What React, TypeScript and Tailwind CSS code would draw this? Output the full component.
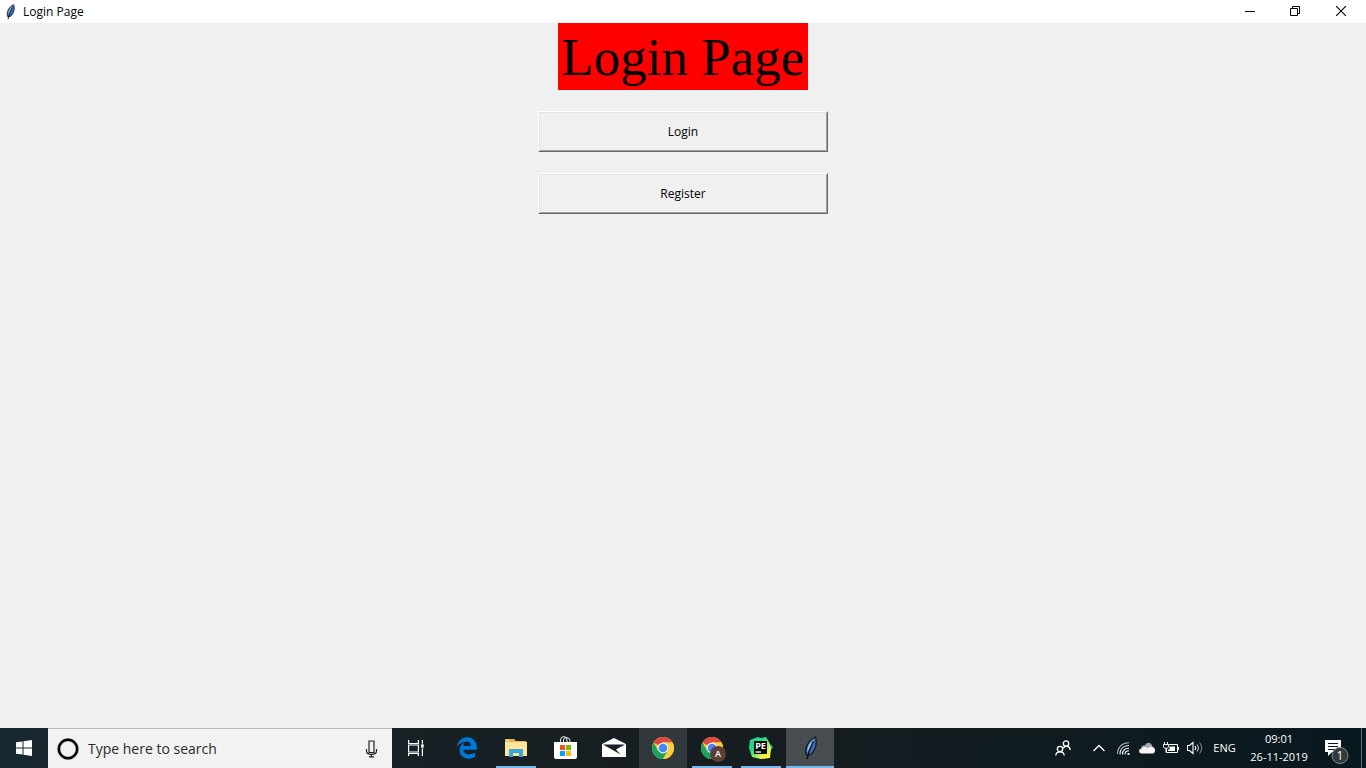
import type { ReactNode } from "react";
import { FaEdgeLegacy } from "react-icons/fa6";

function Feather({ className }: { className: string }) {
  return (
    <svg viewBox="0 0 16 24" className={className} aria-hidden="true">
      <path d="M13.500 1 C15.500 6 14 14 9 18.500 L4.500 19 C2.500 13 5 5 13.500 1Z" fill="#3c6fb0" stroke="#11161c" strokeWidth="1.200" />
      <path d="M12.500 3 C7.500 6 5 11 5.200 16.500 L9 11 Z" fill="#8db8ea" />
      <path d="M11.500 5 C9 10 6.500 16 5 23" fill="none" stroke="#0b0d10" strokeWidth="1.300" />
    </svg>
  );
}

function ChromeLogo() {
  return (
    <svg viewBox="0 0 24 24" className="size-6" aria-hidden="true">
      <circle cx="12" cy="12" r="11" fill="#fccd3c" />
      <path d="M12 12 L2.470 6.500 A11 11 0 0 1 21.530 6.500 L12 6.500 Z" fill="#dd4b3e" />
      <path d="M2.470 6.500 A11 11 0 0 0 12 23 L16.800 14.700 L12 12 L7.200 14.700 Z" fill="#1da261" />
      <path d="M12 6.500 H21.530 A11 11 0 0 1 12 23 L16.800 14.700 Z" fill="#fccd3c" />
      <circle cx="12" cy="12" r="5.400" fill="#f4f4f4" />
      <circle cx="12" cy="12" r="4.300" fill="#4587f3" />
    </svg>
  );
}

function Task({ label, open, tint = "", children }: { label: string; open?: boolean; tint?: string; children: ReactNode }) {
  return (
    <button type="button" aria-label={label} className={`relative flex h-10 w-12 shrink-0 items-center justify-center ${tint}`}>
      {children}
      {open && <span className={`absolute bottom-0 h-0.5 bg-[#76b9ed] ${label === "Login Page" ? "inset-x-0" : "inset-x-1"}`} />}
    </button>
  );
}

function TitleBar() {
  return (
    <header className="flex h-[23px] items-center bg-white pl-1">
      <Feather className="h-4 w-3" />
      <span className="ml-[7px] flex-1 text-xs leading-4">Login Page</span>
      <div className="flex h-full items-center pb-0.5">
        <button type="button" aria-label="Minimize" className="flex w-12 justify-center">
          <svg viewBox="0 0 10 10" className="size-2.5"><path d="M0 5.500H10" stroke="#000" /></svg>
        </button>
        <button type="button" aria-label="Restore" className="flex w-[42px] justify-center">
          <svg viewBox="0 0 10 10" className="size-2.5" fill="none" stroke="#000">
            <path d="M.5 2.500H7.500V9.500H.5ZM2.500 2.500V.5H9.500V7.500H7.500" />
          </svg>
        </button>
        <button type="button" aria-label="Close" className="flex w-[50px] justify-center">
          <svg viewBox="0 0 10 10" className="size-2.5"><path d="M0 0L10 10M10 0L0 10" stroke="#000" strokeWidth="1.100" /></svg>
        </button>
      </div>
    </header>
  );
}

function RaisedButton({ children }: { children: ReactNode }) {
  return (
    <button
      type="button"
      className="h-[41px] w-[290px] border border-t-white border-r-[#696969] border-b-[#696969] border-l-white bg-[#f0f0f0] text-xs leading-4 shadow-[inset_1px_1px_#e3e3e3,inset_-1px_-1px_#a0a0a0]"
    >
      {children}
    </button>
  );
}

function Tray() {
  return (
    <div className="ml-auto flex h-full items-center text-white">
      <button type="button" aria-label="People" className="flex w-12 justify-center">
        <svg viewBox="0 0 16 16" className="size-4" fill="none" stroke="currentColor" strokeWidth="1.300">
          <circle cx="11" cy="3.500" r="2.700" />
          <circle cx="5" cy="9" r="2.700" />
          <path d="M.8 15.500C1 10.700 9 10.700 9.200 15.500M8.200 8.200C10 5.200 14.800 6 15.200 10" />
        </svg>
      </button>
      <button type="button" aria-label="Show hidden icons" className="flex w-6 justify-center">
        <svg viewBox="0 0 12 8" className="h-2 w-3" fill="none" stroke="currentColor" strokeWidth="1.300"><path d="M.5 7L6 1.500L11.500 7" /></svg>
      </button>
      <button type="button" aria-label="Network" className="flex w-6 justify-center">
        <svg viewBox="0 0 14 14" className="size-3.5" fill="none" stroke="currentColor" strokeWidth="1.100">
          <path d="M1.500 13C1.500 6.500 6 1.800 13 1.800" opacity=".7" />
          <path d="M4 13.500C4 8 7.500 4.500 13 4.500M6.500 13.500C6.500 9.500 9 7.200 13 7.200M9 13.500C9 11 10.500 9.800 13 9.800" />
          <path d="M11.500 12H13.500V14H11.500Z" fill="currentColor" stroke="none" />
        </svg>
      </button>
      <button type="button" aria-label="OneDrive" className="flex w-6 justify-center">
        <svg viewBox="0 0 18 12" className="h-3 w-[18px]">
          <path d="M3 7.500C2.500 4 6 2.800 7 3.500C9-1 14 .8 14.500 5L10 8Z" fill="#a5a9ab" />
          <path d="M4 11.500C0 11.500 .3 6.500 4 6.500C5.500 4.300 8 4.800 9 6L12.500 4.800C15 4.200 17.500 6 17 9C16.700 11 15.500 11.500 14 11.500Z" fill="#f5f5f5" />
        </svg>
      </button>
      <button type="button" aria-label="Battery" className="flex w-6 justify-center">
        <svg viewBox="0 0 16 12" className="h-3 w-4" fill="none" stroke="currentColor">
          <path d="M6 2.500H14.500V10.500H3.500V7M1.500 0V2M4.500 0V2M.5 2.500H5.500V4.500C5.500 7 .5 7 .5 4.500ZM3 6V10.500M15.500 5V8" />
          <path d="M5 7.500H6.500V4.500H12V9H5Z" fill="currentColor" stroke="none" />
        </svg>
      </button>
      <button type="button" aria-label="Volume" className="flex w-6 justify-center">
        <svg viewBox="0 0 16 14" className="h-3.5 w-4" fill="none" stroke="currentColor" strokeWidth="1.100">
          <path d="M.5 4.500H2.500L6 1.500V12.500L2.500 9.500H.5ZM8 5Q9.500 7 8 9" />
          <path d="M10 3.500Q13 7 10 10.500" opacity=".7" />
          <path d="M12.500 1.500Q17 7 12.500 12.500" opacity=".45" />
        </svg>
      </button>
      <button type="button" className="w-[35px] text-center text-[11px] leading-4">ENG</button>
      <button type="button" className="w-[74px] text-center text-[11px] leading-[18px]">
        <span className="block">09:01</span>
        <span className="block">26-11-2019</span>
      </button>
      <button type="button" aria-label="Notifications, 1 new" className="ml-1.5 flex w-[39px] self-end">
        <svg viewBox="0 0 28 32" className="h-8 w-7" aria-hidden="true">
          <path d="M3 4H19V16H10L6 20V16H3Z" fill="#fff" />
          <path d="M6 7.500H16M6 10.500H16M6 13.500H13" stroke="#0b1920" />
          <circle cx="18" cy="19.500" r="8" fill="#33393c" stroke="#878c8f" />
          <text x="18" y="24" textAnchor="middle" fill="#fff" fontSize="12">1</text>
        </svg>
      </button>
      <button type="button" aria-label="Show desktop" className="h-full w-[5px] border-l border-[#657176]" />
    </div>
  );
}

function Taskbar() {
  return (
    <footer className="flex h-10 items-center bg-linear-to-r from-[#17282e] via-[#171d20] to-[#08191f]">
      <button type="button" aria-label="Start" className="flex w-12 shrink-0 justify-center">
        <svg viewBox="0 0 16 16" className="size-4" fill="#fff">
          <path d="M0 2.300L6.500 1.400V7.500H0ZM7.500 1.200L16 0V7.500H7.500ZM0 8.500H6.500V14.600L0 13.700ZM7.500 8.500H16V16L7.500 14.800Z" />
        </svg>
      </button>
      <div className="flex h-full w-[344px] items-center border-t border-[#b8b8b8] bg-[#f2f2f2] pr-3 pl-2">
        <svg viewBox="0 0 24 24" className="size-6 shrink-0" aria-hidden="true">
          <circle cx="12" cy="12" r="9.200" fill="none" stroke="#555" strokeWidth="3.600" opacity=".4" />
          <circle cx="12" cy="12" r="9.200" fill="none" stroke="#000" strokeWidth="2.400" />
        </svg>
        <input
          type="text"
          aria-label="Type here to search"
          placeholder="Type here to search"
          className="ml-2 min-w-0 flex-1 bg-transparent text-sm text-[#2b2b2b] outline-none placeholder:text-[#2b2b2b]"
        />
        <button type="button" aria-label="Voice search">
          <svg viewBox="0 0 16 18" className="h-[18px] w-4" fill="none" stroke="#222" strokeWidth="1.200">
            <path d="M5 1H10V12.500H5ZM2.500 9V11C2.500 15.500 12.500 15.500 12.500 11V9M7.500 14.500V17M5 16.800H10" />
          </svg>
        </button>
      </div>
      <Task label="Task View">
        <svg viewBox="0 0 16 16" className="size-4" fill="none" stroke="#fff" strokeWidth="1.200">
          <path d="M.6 0V3.500H10.400V0M.6 5H10.400V12H.6ZM.6 16V13.500H10.400V16M14.400 0V16" />
          <path d="M12.800 4H16V8H12.800Z" fill="#fff" stroke="#171f22" strokeWidth=".6" />
        </svg>
      </Task>
      <nav aria-label="Applications" className="ml-[3px] flex gap-px">
        <Task label="Edge"><FaEdgeLegacy className="size-[22px] text-[#0078d7]" /></Task>
        <Task label="File Explorer" open>
          <svg viewBox="0 0 22 20" className="h-5 w-[22px]">
            <path d="M0 1H9L11 3H21V18H0Z" fill="#e8b64c" />
            <path d="M1.500 2H4V3H1.500Z" fill="#fff" />
            <path d="M0 4H22V18H0Z" fill="#ffe69a" />
            <path d="M4 19V12Q4 11 5 11H17Q18 11 18 12V19H14V15H8V19Z" fill="#35a7df" />
          </svg>
        </Task>
        <Task label="Store">
          <svg viewBox="0 0 24 24" className="size-6">
            <path d="M7.500 7V4Q7.500 .6 11 .6Q14 .6 14 4V7M10.500 7V4Q10.500 1.600 13.500 1.600Q17 1.600 17 5V7" fill="none" stroke="#eee" />
            <path d="M1 6H24V21Q24 23 22 23H3Q1 23 1 21Z" fill="#fff" />
            <path d="M7 9H12V14H7Z" fill="#f25022" />
            <path d="M13 9H18V14H13Z" fill="#7fba00" />
            <path d="M7 15H12V20H7Z" fill="#00a4ef" />
            <path d="M13 15H18V20H13Z" fill="#ffb900" />
          </svg>
        </Task>
        <Task label="Mail">
          <svg viewBox="0 0 24 20" className="h-5 w-6">
            <path d="M0 6L12 0L24 6V19H0Z" fill="#fff" />
            <path d="M1 6.500H23L14 11.500L18.500 16.500Z" fill="#192124" />
          </svg>
        </Task>
        <Task label="Chrome" tint="bg-[#30383b]"><ChromeLogo /></Task>
        <Task label="Chrome, profile A" open>
          <ChromeLogo />
          <span className="absolute top-[18px] left-[22px] flex size-4 items-center justify-center rounded-full bg-[#5b4037] text-[9px] font-semibold text-white">A</span>
        </Task>
        <Task label="PyCharm Edu" open>
          <svg viewBox="0 0 24 24" className="size-6">
            <defs>
              <linearGradient id="edu" x1="0" y1="0" x2="1" y2="1">
                <stop offset="0.35" stopColor="#21d789" />
                <stop offset="0.75" stopColor="#f4f545" />
              </linearGradient>
            </defs>
            <path d="M18 5L24 11L20 17Z" fill="#18bde5" />
            <path d="M1 4L9 1L12 2L17 1L20 6L22 12L21 22L12 23L3 21L0 12Z" fill="url(#edu)" />
            <path d="M5 5H18V18H5Z" fill="#090909" />
            <path d="M6.500 16H12" stroke="#fff" strokeWidth="1.300" />
            <text x="11.500" y="13" textAnchor="middle" fill="#fff" fontSize="9" fontWeight="700">PE</text>
          </svg>
        </Task>
        <Task label="Login Page" open tint="bg-[#474d50]"><Feather className="h-6 w-4" /></Task>
      </nav>
      <Tray />
    </footer>
  );
}

export default function App() {
  return (
    <div className="flex min-h-screen flex-col bg-[#f0f0f0] font-['Open_Sans','Noto_Sans',sans-serif] text-black">
      <TitleBar />
      <main className="flex flex-1 flex-col items-center gap-[21px]">
        <h1 className="flex h-[67px] items-center bg-[#ff0000] px-1 pt-0.5 font-['Liberation_Serif',serif] text-[53px] leading-none">Login Page</h1>
        <RaisedButton>Login</RaisedButton>
        <RaisedButton>Register</RaisedButton>
      </main>
      <Taskbar />
    </div>
  );
}
